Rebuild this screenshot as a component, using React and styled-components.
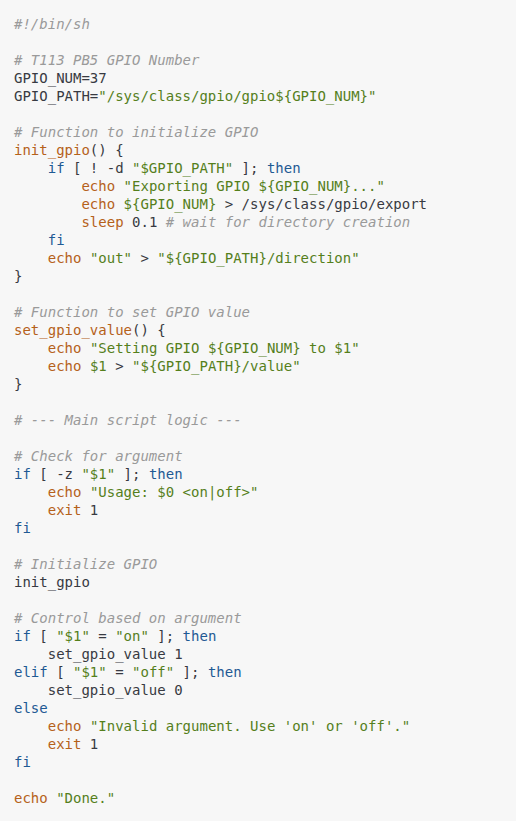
import React from 'react';
import styled, { createGlobalStyle } from 'styled-components';

const GlobalStyle = createGlobalStyle`
  html, body {
    margin: 0;
    padding: 0;
    background: #f7f7f7;
  }
`;

const CodeBlock = styled.pre`
  margin: 0;
  padding: 15px 14px 11px;
  min-height: 821px;
  box-sizing: border-box;
  background: #f7f7f7;
  font-family: "DejaVu Sans Mono", "Liberation Mono", monospace;
  font-size: 14px;
  line-height: 18px;
  color: #383a42;
  white-space: pre;
`;

const Line = styled.div`
  height: 18px;
`;

const colors = {
  k: '#1f5a94',
  f: '#b5611a',
  s: '#557f1c',
  v: '#557f1c',
  c: '#9a9a9a',
  p: '#383a42',
};

const Token = styled.span`
  color: ${(p) => colors[p.$kind]};
  font-style: ${(p) => (p.$kind === 'c' ? 'italic' : 'normal')};
`;

// source lines, each a list of [kind, text]
const code = [
  [['c', '#!/bin/sh']],
  [],
  [['c', '# T113 PB5 GPIO Number']],
  [['p', 'GPIO_NUM=37']],
  [['p', 'GPIO_PATH='], ['s', '"/sys/class/gpio/gpio${GPIO_NUM}"']],
  [],
  [['c', '# Function to initialize GPIO']],
  [['f', 'init_gpio'], ['p', '() {']],
  [['p', '    '], ['k', 'if'], ['p', ' [ ! -d '], ['s', '"$GPIO_PATH"'], ['p', ' ]; '], ['k', 'then']],
  [['p', '        '], ['f', 'echo'], ['p', ' '], ['s', '"Exporting GPIO ${GPIO_NUM}..."']],
  [['p', '        '], ['f', 'echo'], ['p', ' '], ['v', '${GPIO_NUM}'], ['p', ' > /sys/class/gpio/export']],
  [['p', '        '], ['f', 'sleep'], ['p', ' 0.1 '], ['c', '# wait for directory creation']],
  [['p', '    '], ['k', 'fi']],
  [['p', '    '], ['f', 'echo'], ['p', ' '], ['s', '"out"'], ['p', ' > '], ['s', '"${GPIO_PATH}/direction"']],
  [['p', '}']],
  [],
  [['c', '# Function to set GPIO value']],
  [['f', 'set_gpio_value'], ['p', '() {']],
  [['p', '    '], ['f', 'echo'], ['p', ' '], ['s', '"Setting GPIO ${GPIO_NUM} to $1"']],
  [['p', '    '], ['f', 'echo'], ['p', ' '], ['v', '$1'], ['p', ' > '], ['s', '"${GPIO_PATH}/value"']],
  [['p', '}']],
  [],
  [['c', '# --- Main script logic ---']],
  [],
  [['c', '# Check for argument']],
  [['k', 'if'], ['p', ' [ -z '], ['s', '"$1"'], ['p', ' ]; '], ['k', 'then']],
  [['p', '    '], ['f', 'echo'], ['p', ' '], ['s', '"Usage: $0 <on|off>"']],
  [['p', '    '], ['f', 'exit'], ['p', ' 1']],
  [['k', 'fi']],
  [],
  [['c', '# Initialize GPIO']],
  [['p', 'init_gpio']],
  [],
  [['c', '# Control based on argument']],
  [['k', 'if'], ['p', ' [ '], ['s', '"$1"'], ['p', ' = '], ['s', '"on"'], ['p', ' ]; '], ['k', 'then']],
  [['p', '    set_gpio_value 1']],
  [['k', 'elif'], ['p', ' [ '], ['s', '"$1"'], ['p', ' = '], ['s', '"off"'], ['p', ' ]; '], ['k', 'then']],
  [['p', '    set_gpio_value 0']],
  [['k', 'else']],
  [['p', '    '], ['f', 'echo'], ['p', ' '], ['s', '"Invalid argument. Use \'on\' or \'off\'."']],
  [['p', '    '], ['f', 'exit'], ['p', ' 1']],
  [['k', 'fi']],
  [],
  [['f', 'echo'], ['p', ' '], ['s', '"Done."']],
];

const App = () => (
  <>
    <GlobalStyle />
    <CodeBlock>
      {code.map((tokens, i) => (
        <Line key={i}>
          {tokens.map(([kind, text], j) => (
            <Token key={j} $kind={kind}>{text}</Token>
          ))}
        </Line>
      ))}
    </CodeBlock>
  </>
);

export default App;
